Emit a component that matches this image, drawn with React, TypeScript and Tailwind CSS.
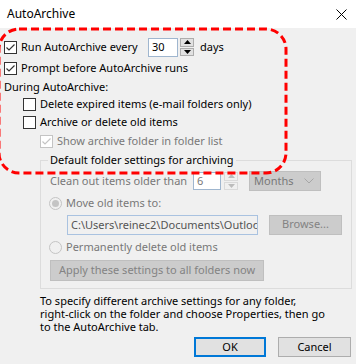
import React from 'react';

const font = { fontFamily: '"Noto Sans", "Segoe UI", sans-serif' };

function Check({ checked, disabled }: { checked?: boolean; disabled?: boolean }) {
  return (
    <span
      className={`flex w-[13px] h-[13px] shrink-0 items-center justify-center border bg-white ${
        disabled ? 'border-[#c4c4c4]' : 'border-[#333333]'
      }`}
    >
      {checked && (
        <svg width="11" height="11" viewBox="0 0 11 11">
          <path d="M1.5 5.5 L4 8 L9.5 2.5" fill="none" stroke={disabled ? '#c4c4c4' : '#333333'} strokeWidth="1.2" />
        </svg>
      )}
    </span>
  );
}

function Radio({ selected }: { selected?: boolean }) {
  return (
    <span className="flex w-[13px] h-[13px] shrink-0 items-center justify-center rounded-full border border-[#c4c4c4] bg-[#f0f0f0]">
      {selected && <span className="w-[7px] h-[7px] rounded-full bg-[#c4c4c4]" />}
    </span>
  );
}

function Spinner({ disabled }: { disabled?: boolean }) {
  const fill = disabled ? '#bcbcbc' : '#000000';
  const box = disabled ? 'border-[#dadada] bg-[#f0f0f0]' : 'border-[#adadad] bg-[#e1e1e1]';
  return (
    <div className="flex flex-col h-[18px] w-[14px] gap-[1px]">
      <div className={`flex-1 flex items-center justify-center border ${box}`}>
        <svg width="7" height="4" viewBox="0 0 7 4">
          <path d="M0 4 L3.5 0 L7 4 Z" fill={fill} />
        </svg>
      </div>
      <div className={`flex-1 flex items-center justify-center border ${box}`}>
        <svg width="7" height="4" viewBox="0 0 7 4">
          <path d="M0 0 L3.5 4 L7 0 Z" fill={fill} />
        </svg>
      </div>
    </div>
  );
}

export default function App() {
  return (
    <div
      className="relative w-[356px] h-[364px] overflow-hidden whitespace-nowrap bg-[#f0f0f0] text-[11px] text-black"
      style={font}
    >
      {/* title bar */}
      <div className="flex h-[28px] items-center justify-between bg-white pl-[7px] pr-[8px]">
        <span className="text-[12px] leading-none">AutoArchive</span>
        <svg width="11" height="11" viewBox="0 0 11 11" className="mr-[1px]">
          <path d="M0.5 0.5 L10.5 10.5 M10.5 0.5 L0.5 10.5" stroke="#000" strokeWidth="1" />
        </svg>
      </div>

      <div className="flex flex-col">
        <div className="mt-[9px] flex h-[20px] items-center pl-[4px]">
          <Check checked />
          <span className="ml-[4px] w-[127px]">Run AutoArchive every</span>
          <div className="flex h-[19px] w-[30px] items-center border border-[#9fb6cf] bg-white pl-[3px]">30</div>
          <div className="ml-[2px]">
            <Spinner />
          </div>
          <span className="ml-[6px]">days</span>
        </div>

        <div className="mt-[1px] flex h-[21px] items-center pl-[4px]">
          <Check checked />
          <span className="ml-[4px]">Prompt before AutoArchive runs</span>
        </div>

        <div className="flex h-[16px] items-center pl-[4px]">During AutoArchive:</div>

        <div className="flex h-[18px] items-center pl-[23px]">
          <Check />
          <span className="ml-[4px]">Delete expired items (e-mail folders only)</span>
        </div>

        <div className="flex h-[18px] items-center pl-[23px]">
          <Check />
          <span className="ml-[4px]">Archive or delete old items</span>
        </div>

        <div className="mt-[1px] flex h-[18px] items-center pl-[40px] text-[#787878]">
          <Check checked disabled />
          <span className="ml-[4px]">Show archive folder in folder list</span>
        </div>

        <fieldset className="ml-[40px] mt-[2px] w-[312px] border border-[#dcdcdc] pb-[7px]">
          <legend className="ml-[7px] px-[2px] leading-[16px]">Default folder settings for archiving</legend>

          <div className="mt-[3px] flex h-[20px] items-center pl-[9px] text-[#787878]">
            <span className="w-[143px]">Clean out items older than</span>
            <div className="flex h-[18px] w-[28px] items-center border border-[#9fb6cf] bg-white pl-[3px]">6</div>
            <div className="ml-[3px]">
              <Spinner disabled />
            </div>
            <div className="ml-[11px] flex h-[20px] w-[72px] items-center justify-between border border-[#bfbfbf] bg-[#cccccc] pl-[4px] pr-[6px]">
              <span>Months</span>
              <svg width="10" height="6" viewBox="0 0 10 6">
                <path d="M0.5 0.5 L5 5 L9.5 0.5" fill="none" stroke="#a6a6a6" strokeWidth="1" />
              </svg>
            </div>
          </div>

          <div className="mt-[2px] flex h-[20px] items-center pl-[8px] text-[#787878]">
            <Radio selected />
            <span className="ml-[4px]">Move old items to:</span>
          </div>

          <div className="mt-[1px] flex h-[21px] items-center pl-[26px]">
            <input
              readOnly
              value="C:\Users\reinec2\Documents\Outlook Files\archive.pst"
              className="h-[20px] w-[191px] border border-[#a9c2e0] bg-[#f0f0f0] pl-[3px] text-[#545454] outline-none"
            />
            <div className="ml-[11px] flex h-[20px] w-[73px] items-center justify-center border border-[#bfbfbf] bg-[#cccccc] text-[#838383]">
              Browse...
            </div>
          </div>

          <div className="mt-[3px] flex h-[18px] items-center pl-[8px] text-[#787878]">
            <Radio />
            <span className="ml-[4px]">Permanently delete old items</span>
          </div>

          <div className="mt-[4px] pl-[9px]">
            <div className="flex h-[21px] w-[214px] items-center justify-center border border-[#bfbfbf] bg-[#cccccc] text-[#838383]">
              Apply these settings to all folders now
            </div>
          </div>
        </fieldset>

        <p className="mt-[5px] pl-[40px] pr-[10px] leading-[13px]">
          To specify different archive settings for any folder,
          <br />
          right-click on the folder and choose Properties, then go
          <br />
          to the AutoArchive tab.
        </p>

        <div className="mt-[4px] flex justify-end gap-[12px] pr-[5px]">
          <div className="flex h-[20px] w-[72px] items-center justify-center border-2 border-[#0078d7] bg-[#e1e1e1]">OK</div>
          <div className="flex h-[20px] w-[73px] items-center justify-center border border-[#adadad] bg-[#e1e1e1]">Cancel</div>
        </div>
      </div>

      {/* red annotation */}
      <svg className="pointer-events-none absolute left-0 top-0" width="356" height="364">
        <rect x="-1" y="29" width="287" height="144" rx="20" fill="none" stroke="#ff0000" strokeWidth="3" strokeDasharray="8 4" />
      </svg>
    </div>
  );
}
